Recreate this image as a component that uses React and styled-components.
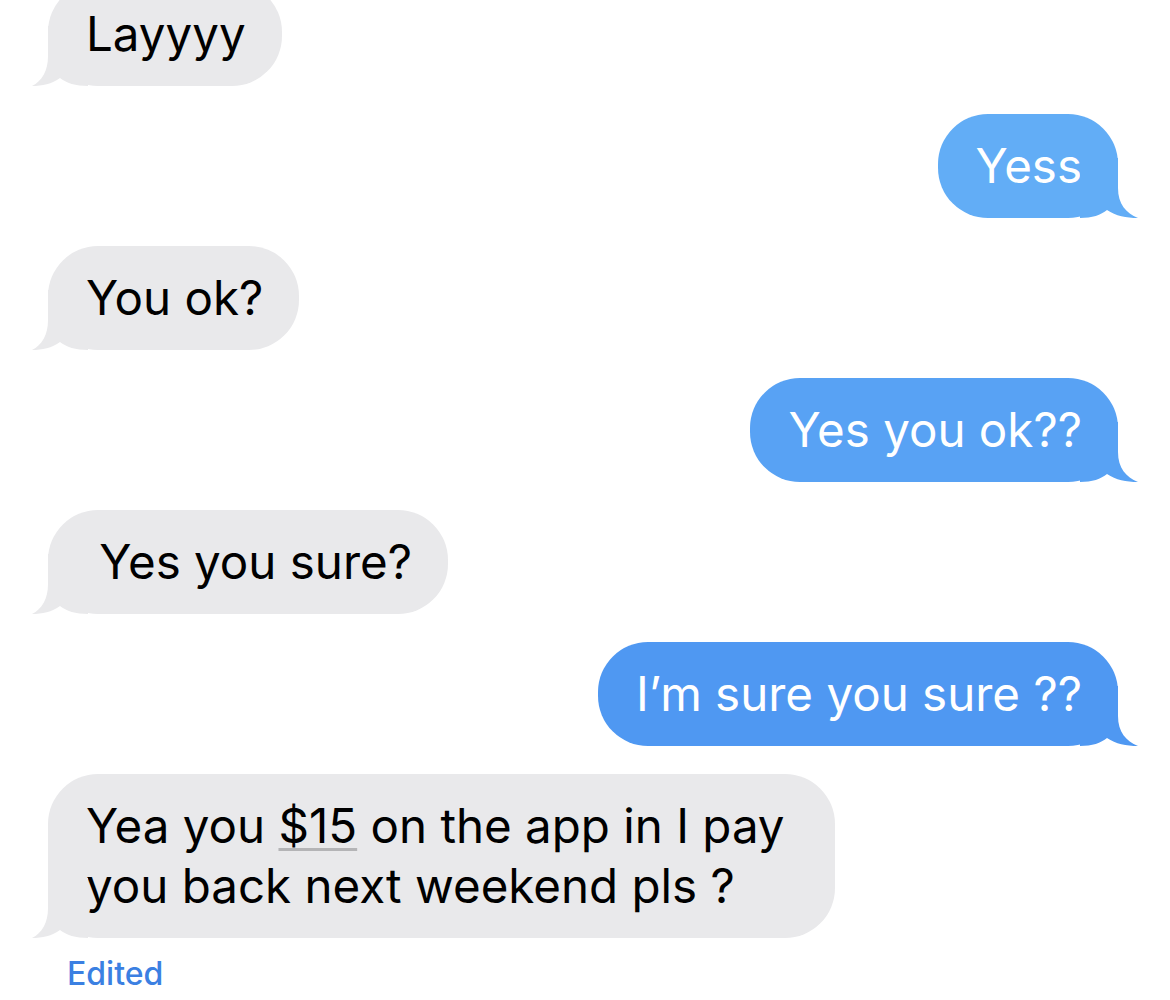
import styled, { createGlobalStyle } from "styled-components";

const messages = [
  { from: "them", text: "Layyyy" },
  { from: "me", text: "Yess", color: "#62adf6" },
  { from: "them", text: "You ok?" },
  { from: "me", text: "Yes you ok??", color: "#58a2f4" },
  { from: "them", text: "\u00a0Yes you sure?" },
  { from: "me", text: "I\u2019m sure you sure ??", color: "#4f98f2" },
];

const Global = createGlobalStyle`
  body {
    margin: 0;
    background: #fff;
    font-family: Inter, "Liberation Sans", sans-serif;
    overflow: hidden;
  }
`;

const Thread = styled.div`
  display: flex;
  flex-direction: column;
  gap: 28px;
  padding: 0 52px 0 48px;
  margin-top: -18px;
`;

const Row = styled.div`
  display: flex;
  justify-content: ${(p) => (p.me ? "flex-end" : "flex-start")};
`;

const Bubble = styled.div`
  position: relative;
  background: ${(p) => p.bg};
  color: ${(p) => (p.me ? "#fff" : "#000")};
  font-size: 47.5px;
  line-height: 60px;
  padding: 22px ${(p) => p.padRight || 36}px 22px 38px;
  border-radius: 50px;
  white-space: pre;
`;

const Tail = styled.svg`
  position: absolute;
  bottom: 0;
  width: 60px;
  height: 60px;
  ${(p) =>
    p.me
      ? "right: -20px; transform: scaleX(-1);"
      : "left: -16px;"}
`;

const Money = styled.span`
  text-decoration: underline;
  text-decoration-color: #b4b4b6;
  text-decoration-thickness: 2.5px;
  text-underline-offset: 5px;
  text-decoration-skip-ink: auto;
`;

const Edited = styled.div`
  margin: 16px 0 0 19px;
  font-size: 32px;
  font-weight: 500;
  color: #3b80e2;
`;

const BubbleTail = ({ me, color }) => (
  <Tail me={me} viewBox="0 0 60 60">
    {me ? (
      <path
        d="M20 0 L20 30 C20 46 12 55 0 60 C12 60 22 58 31 52 C37 57 46 60 58 60 L58 0 Z"
        fill={color}
      />
    ) : (
      <path
        d="M16 0 L16 30 C16 45 10 55 0 60 C10 60 20 58 28 52 C34 57 44 60 56 60 L56 0 Z"
        fill={color}
      />
    )}
  </Tail>
);

const Message = ({ from, text, color, padRight, children }) => {
  const me = from === "me";
  const bg = me ? color : "#e9e9eb";
  return (
    <Row me={me}>
      <Bubble me={me} bg={bg} padRight={padRight}>
        <BubbleTail me={me} color={bg} />
        {children || text}
      </Bubble>
    </Row>
  );
};

export default function App() {
  return (
    <>
      <Global />
      <Thread>
        {messages.map((m, i) => (
          <Message key={i} {...m} />
        ))}
        <div>
          <Message from="them" padRight={50}>
            Yea you <Money>$15</Money> on the app in I pay
            <br />
            you back next weekend pls ?
          </Message>
          <Edited>Edited</Edited>
        </div>
      </Thread>
    </>
  );
}
